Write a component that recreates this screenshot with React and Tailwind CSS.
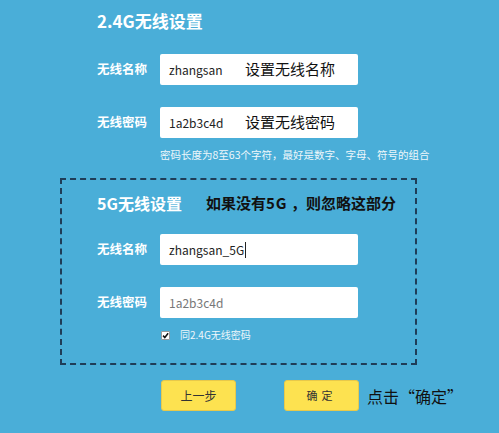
import React from 'react';

const font = { fontFamily: '"Noto Sans CJK SC", "Noto Sans", sans-serif' };

const Field = ({ label, value, note, grey }) => (
    <div className="flex items-center">
        <div className="w-[63px] text-[12.5px] font-bold text-white">{label}</div>
        <div className="flex h-[31px] w-[198px] items-center rounded-[2px] bg-white pl-[9px]">
            <span className={`w-[76px] text-[12px] ${grey ? 'text-[#777]' : 'text-[#222]'}`}>{value}</span>
            {note && <span className="text-[15px] text-[#111]">{note}</span>}
        </div>
    </div>
);

const App = () => {
    return (
        <div className="h-[433px] w-[499px] overflow-hidden bg-[#4aaed8]" style={font}>
            {/* 2.4G */}
            <div className="pl-[97px] pt-[9px]">
                <h1 className="text-[17px] font-bold leading-[24px] text-white">2.4G无线设置</h1>
                <div className="mt-[21px] flex flex-col gap-[22px]">
                    <Field label="无线名称" value="zhangsan" note="设置无线名称" />
                    <Field label="无线密码" value="1a2b3c4d" note="设置无线密码" />
                </div>
                <p className="ml-[63px] mt-[9px] whitespace-nowrap text-[10.5px] leading-[16px] text-[#eef7fb]">
                    密码长度为8至63个字符，最好是数字、字母、符号的组合
                </p>
            </div>

            {/* 5G */}
            <div className="ml-[60px] mt-[15px] w-[357px] border-2 border-dashed border-[#1f3d58] pb-[20px] pl-[35px] pt-[11px]">
                <div className="flex items-center">
                    <h2 className="w-[109px] text-[16px] font-bold leading-[24px] text-white">5G无线设置</h2>
                    <span className="text-[15px] font-bold text-[#111]">如果没有<span className="tracking-[1px]">5G</span> ，则忽略这部分</span>
                </div>
                <div className="mt-[19px] flex flex-col gap-[22px]">
                    <div className="flex items-center">
                        <div className="w-[63px] text-[12.5px] font-bold text-white">无线名称</div>
                        <div className="flex h-[31px] w-[198px] items-center rounded-[2px] bg-white pl-[9px] text-[12px] text-[#222]">
                            zhangsan_5G<span className="ml-[1px] h-[16px] w-px bg-[#222]" />
                        </div>
                    </div>
                    <Field label="无线密码" value="1a2b3c4d" grey />
                </div>
                <div className="ml-[64px] mt-[9px] flex items-center gap-[10px]">
                    <span className="flex h-[9px] w-[9px] items-center justify-center rounded-[1px] border border-[#999] bg-white">
                        <svg viewBox="0 0 10 10" className="h-[7px] w-[7px]">
                            <path d="M1.5 5.2 L4 7.8 L8.8 1.8" fill="none" stroke="#111" strokeWidth="2.2" />
                        </svg>
                    </span>
                    <span className="text-[10px] leading-[16px] text-[#eef7fb]">同2.4G无线密码</span>
                </div>
            </div>

            {/* Buttons */}
            <div className="ml-[161px] mt-[15px] flex items-center">
                <button className="h-[31px] w-[75px] rounded-[3px] border border-[#e8c94a] bg-[#fde250] text-[12px] text-[#333]">上一步</button>
                <button className="ml-[48px] h-[31px] w-[75px] rounded-[3px] border border-[#e8c94a] bg-[#fde250] text-[11px] tracking-[4px] text-[#333]">确定</button>
                <span className="ml-[8px] text-[16px] text-[#111]">点击“确定”</span>
            </div>
        </div>
    );
};

export default App;
